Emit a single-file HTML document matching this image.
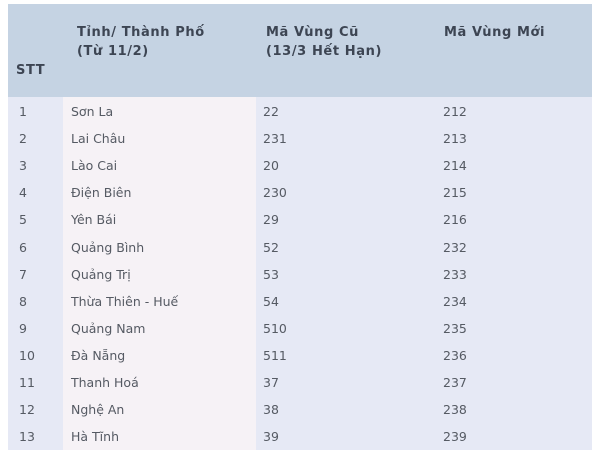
<!DOCTYPE html>
<html><head><meta charset="utf-8"><style>
html,body{margin:0;padding:0;background:#fff;width:600px;height:456px;overflow:hidden}
.t{position:absolute;left:8px;top:4px;width:584px;height:446px;background:#e6e9f5}
.hd{position:absolute;left:0;top:0;width:584px;height:93px;background:#c5d3e3}
.c2{position:absolute;left:55px;top:93px;width:193px;height:353px;background:#f6f2f6}
.h{position:absolute;font:bold 13px "DejaVu Sans","Liberation Sans",sans-serif;color:#3d4553;line-height:19px;letter-spacing:0.6px}
.r{position:absolute;font:12.5px "DejaVu Sans","Liberation Sans",sans-serif;color:#555a63;line-height:16px}
</style></head><body>
<div class="t"><div class="hd"></div><div class="c2"></div></div>
<div class="h" style="left:16px;top:61px">STT</div>
<div class="h" style="left:77px;top:23px">Tỉnh/ Thành Phố<br>(Từ 11/2)</div>
<div class="h" style="left:266px;top:23px">Mã Vùng Cũ<br>(13/3 Hết Hạn)</div>
<div class="h" style="left:444px;top:23px">Mã Vùng Mới</div>
<div id="rows"></div>
<script>
var d=[["1","Sơn La","22","212"],["2","Lai Châu","231","213"],["3","Lào Cai","20","214"],["4","Điện Biên","230","215"],["5","Yên Bái","29","216"],["6","Quảng Bình","52","232"],["7","Quảng Trị","53","233"],["8","Thừa Thiên - Huế","54","234"],["9","Quảng Nam","510","235"],["10","Đà Nẵng","511","236"],["11","Thanh Hoá","37","237"],["12","Nghệ An","38","238"],["13","Hà Tĩnh","39","239"]];
var x=[19,71,263,443],h="";
d.forEach(function(r,i){var y=104+i*27.1;r.forEach(function(c,j){h+='<div class="r" style="left:'+x[j]+'px;top:'+y+'px">'+c+'</div>';});});
document.getElementById("rows").innerHTML=h;
</script>
</body></html>
